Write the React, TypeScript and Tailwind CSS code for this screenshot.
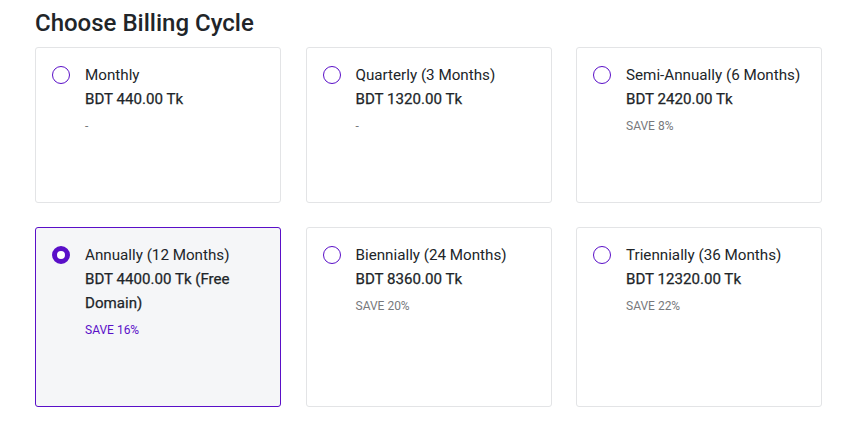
import React from "react";

type Opt = { name: string; price: string; note: string; selected?: boolean };

const opts: Opt[] = [
  { name: "Monthly", price: "BDT 440.00 Tk", note: "-" },
  { name: "Quarterly (3 Months)", price: "BDT 1320.00 Tk", note: "-" },
  { name: "Semi-Annually (6 Months)", price: "BDT 2420.00 Tk", note: "SAVE 8%" },
  { name: "Annually (12 Months)", price: "BDT 4400.00 Tk (Free Domain)", note: "SAVE 16%", selected: true },
  { name: "Biennially (24 Months)", price: "BDT 8360.00 Tk", note: "SAVE 20%" },
  { name: "Triennially (36 Months)", price: "BDT 12320.00 Tk", note: "SAVE 22%" },
];

function Card({ o }: { o: Opt }) {
  return (
    <div
      className={
        o.selected
          ? "flex rounded-[3px] border border-[#5a0fc8] bg-[#f5f6f8] pl-[16px] pr-[12px] pt-[15px] pb-[66px]"
          : "flex rounded-[3px] border border-[#e3e4e6] bg-white pl-[16px] pr-[12px] pt-[15px] pb-[66px]"
      }
    >
      <div className="pt-[3px] w-[33px] shrink-0">
        {o.selected ? (
          <div className="w-[18px] h-[18px] rounded-full border-[5px] border-[#5a0fc8] bg-white" />
        ) : (
          <div className="w-[18px] h-[18px] rounded-full border-[1.5px] border-[#5a0fc8] bg-white" />
        )}
      </div>
      <div className="flex flex-col">
        <div className="text-[15.2px] leading-[24px] text-[#212529]">{o.name}</div>
        <div className="text-[15.1px] leading-[24px] font-normal text-[#212529] [-webkit-text-stroke:0.25px_#212529]">{o.price}</div>
        <div
          className={
            o.selected
              ? "mt-[5px] text-[12px] leading-[20px] text-[#5a0fc8]"
              : "mt-[5px] text-[12px] leading-[20px] text-[#77797c]"
          }
        >
          {o.note}
        </div>
      </div>
    </div>
  );
}

export default function App() {
  return (
    <div className="w-[856px] h-[443px] bg-white px-[35px] pt-[7px]" style={{ fontFamily: "Roboto, 'Liberation Sans', sans-serif" }}>
      <h2 className="text-[24px] leading-[32px] font-medium text-[#212529] mb-[8px]">Choose Billing Cycle</h2>
      <div className="grid grid-cols-[246px_246px_246px] gap-x-[24px] gap-y-[24px] w-[787px] justify-between">
        {opts.map((o) => (
          <Card key={o.name} o={o} />
        ))}
      </div>
    </div>
  );
}
